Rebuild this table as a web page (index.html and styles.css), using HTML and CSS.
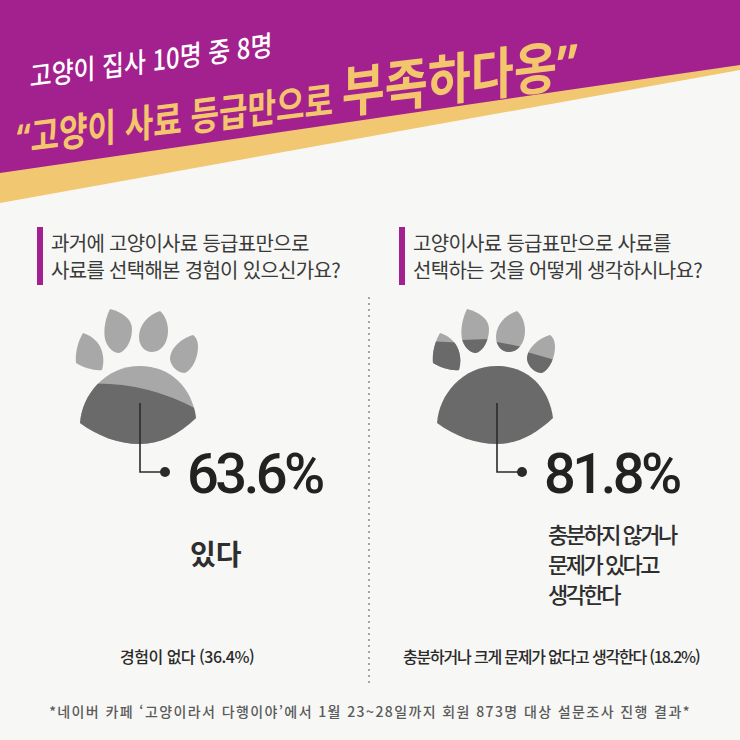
FILE: index.html
```html
<!DOCTYPE html>
<html lang="ko">
<head>
<meta charset="utf-8">
<title>고양이 사료 설문</title>
<link rel="stylesheet" href="styles.css">
</head>
<body>
<div class="page">
  <header class="hero">
    <svg class="hero-bg" width="740" height="210" viewBox="0 0 740 210" aria-hidden="true">
      <polygon fill="#f1c871" points="0,0 740,0 740,70 0,203"/>
      <polygon fill="#a3218e" points="0,0 740,0 740,65 0,173"/>
    </svg>
    <p class="hero-sub">고양이 집사 10명 중 8명</p>
    <p class="hero-title"><span class="qm">“</span>고양이 사료 등급만으로 <span class="big">부족하다옹<span class="qm">”</span></span></p>
  </header>

  <section class="questions">
    <p class="q q-left">과거에 고양이사료 등급표만으로<br>사료를 선택해본 경험이 있으신가요?</p>
    <p class="q q-right">고양이사료 등급표만으로 사료를<br>선택하는 것을 어떻게 생각하시나요?</p>
  </section>

  <section class="charts">
    <div class="col col-left">
      <div class="chart chart-left">
        <svg class="paw" width="130" height="175" viewBox="0 0 130 175" aria-hidden="true">
          <defs>
            <clipPath id="padL"><path d="M10,118 C12,90 35,61 70,61 C100,61 122,82 126,113 C108,130 90,139 70,139 C48,139 28,131 10,118 Z"/></clipPath>
          </defs>
          <g fill="#a8a8a8">
            <path d="M13,28 C8,36 5,48 6,58 C14,63 25,66 32,65 C35,55 33,44 27,37 C23,32 17,29 13,28 Z"/>
            <path d="M40,4 C36,12 33,24 35,34 C37,42 43,48 49,48 C56,46 62,36 62,24 C62,14 52,7 40,4 Z"/>
            <path d="M90,6 C78,10 69,20 69,32 C69,41 75,47 82,47 C91,47 98,38 98,26 C98,18 95,10 90,6 Z"/>
            <path d="M123,30 C110,34 100,44 100,54 C101,62 108,68 115,68 C123,64 128,52 128,42 C128,36 126,32 123,30 Z"/>
          </g>
          <g clip-path="url(#padL)">
            <rect x="0" y="50" width="130" height="100" fill="#a8a8a8"/>
            <path d="M0,80 Q70,72 130,106 L130,150 L0,150 Z" fill="#6a6a6a"/>
          </g>
          <path d="M70,98 V167 H95" fill="none" stroke="#2b2b2b" stroke-width="1.6"/>
          <circle cx="95" cy="167" r="5" fill="#2b2b2b"/>
        </svg>
        <div class="pct">63.6%</div>
      </div>
      <p class="answer answer-left">있다</p>
      <p class="note note-left">경험이 없다 (36.4%)</p>
    </div>

    <div class="divider"></div>

    <div class="col col-right">
      <div class="chart chart-right">
        <svg class="paw" width="130" height="175" viewBox="0 0 130 175" aria-hidden="true">
          <defs>
            <clipPath id="t1"><path d="M13,28 C8,36 5,48 6,58 C14,63 25,66 32,65 C35,55 33,44 27,37 C23,32 17,29 13,28 Z"/></clipPath>
            <clipPath id="t2"><path d="M40,4 C36,12 33,24 35,34 C37,42 43,48 49,48 C56,46 62,36 62,24 C62,14 52,7 40,4 Z"/></clipPath>
            <clipPath id="t3"><path d="M90,6 C78,10 69,20 69,32 C69,41 75,47 82,47 C91,47 98,38 98,26 C98,18 95,10 90,6 Z"/></clipPath>
            <clipPath id="t4"><path d="M123,30 C110,34 100,44 100,54 C101,62 108,68 115,68 C123,64 128,52 128,42 C128,36 126,32 123,30 Z"/></clipPath>
          </defs>
          <g clip-path="url(#t1)">
            <rect x="0" y="20" width="40" height="50" fill="#a8a8a8"/>
            <polygon points="0,36 40,38 40,70 0,70" fill="#6a6a6a"/>
          </g>
          <g clip-path="url(#t2)">
            <rect x="30" y="0" width="36" height="52" fill="#a8a8a8"/>
            <polygon points="30,35 66,34 66,52 30,52" fill="#6a6a6a"/>
          </g>
          <g clip-path="url(#t3)">
            <rect x="65" y="0" width="36" height="52" fill="#a8a8a8"/>
            <polygon points="65,36 101,43 101,52 65,52" fill="#6a6a6a"/>
          </g>
          <g clip-path="url(#t4)">
            <rect x="96" y="25" width="36" height="48" fill="#a8a8a8"/>
            <polygon points="96,46 132,56 132,73 96,73" fill="#6a6a6a"/>
          </g>
          <path fill="#6a6a6a" d="M10,118 C12,90 35,61 70,61 C100,61 122,82 126,113 C108,130 90,139 70,139 C48,139 28,131 10,118 Z"/>
          <path d="M70,98 V167 H95" fill="none" stroke="#2b2b2b" stroke-width="1.6"/>
          <circle cx="95" cy="167" r="5" fill="#2b2b2b"/>
        </svg>
        <div class="pct">81.8%</div>
      </div>
      <p class="answer answer-right">충분하지 않거나<br>문제가 있다고<br>생각한다</p>
      <p class="note note-right">충분하거나 크게 문제가 없다고 생각한다 (18.2%)</p>
    </div>
  </section>

  <p class="foot">*네이버 카페 ‘고양이라서 다행이야’에서 1월 23~28일까지 회원 873명 대상 설문조사 진행 결과*</p>
</div>
</body>
</html>
```

FILE: styles.css
```css
html, body {
  margin: 0;
  padding: 0;
}

body {
  background: #f7f7f5;
  font-family: "Noto Sans CJK KR", "Noto Sans", sans-serif;
  color: #333;
}

.page {
  width: 740px;
  height: 740px;
  overflow: hidden;
}

p {
  margin: 0;
}

/* ---------- hero ---------- */
.hero {
  position: relative;
  height: 206px;
  box-sizing: border-box;
  padding-top: 64px;
}

.hero-bg {
  position: absolute;
  left: 0;
  top: 0;
  z-index: 0;
  display: block;
}

.hero-sub,
.hero-title {
  position: relative;
  z-index: 1;
  white-space: nowrap;
  transform-origin: 0 0;
}

.hero-sub {
  padding-left: 35px;
  font-size: 28px;
  line-height: 30px;
  font-weight: 500;
  color: #ffffff;
  transform: skewY(-7.5deg) scaleX(0.85);
}

.hero-title {
  margin-top: 22px;
  padding-left: 21px;
  font-size: 39px;
  line-height: 44px;
  font-weight: 700;
  color: #f3c66d;
  transform: skewY(-7deg) scaleX(0.795);
}

.hero-title .qm {
  font-family: "Noto Sans", sans-serif;
}

.hero-title .big {
  display: inline-block;
  font-size: 56px;
  line-height: 28px;
  transform: scaleX(1.05);
  transform-origin: 0 100%;
}

/* ---------- questions ---------- */
.questions {
  display: grid;
  grid-template-columns: 370px 370px;
  margin-top: 21px;
}

.q {
  border-left: 6px solid #a3218e;
  padding: 2px 0 2px 8px;
  font-size: 20px;
  line-height: 27px;
  font-weight: 400;
  letter-spacing: -0.7px;
  color: #3a3a3a;
  white-space: nowrap;
}

.q-left {
  margin-left: 37px;
}

.q-right {
  margin-left: 29px;
}

/* ---------- charts ---------- */
.charts {
  display: grid;
  grid-template-columns: 368px 2px 370px;
  height: 390px;
  margin-top: 12px;
}

.divider {
  width: 2px;
  background: repeating-linear-gradient(to bottom, #a6a6a6 0 2px, transparent 2px 6px);
}

.col {
  display: flex;
  flex-direction: column;
}

.chart {
  display: flex;
  align-items: flex-start;
  margin-top: 8px;
}

.chart-left {
  padding-left: 70px;
}

.chart-right {
  padding-left: 57px;
}

.paw {
  display: block;
  flex: none;
}

.pct {
  margin: 142px 0 0 -13px;
  font-family: Roboto, "Liberation Sans", sans-serif;
  font-weight: 500;
  font-size: 56px;
  line-height: 54px;
  letter-spacing: -3.5px;
  color: #222;
}

.answer {
  color: #2e2e2e;
}

.answer-left {
  margin-top: 35px;
  padding-left: 190px;
  font-size: 28px;
  line-height: 34px;
  font-weight: 700;
}

.answer-right {
  margin-top: 17px;
  padding-left: 178px;
  font-size: 22px;
  line-height: 30px;
  font-weight: 500;
  letter-spacing: -2.5px;
}

.note {
  margin-top: auto;
  padding-bottom: 21px;
  font-size: 16px;
  line-height: 20px;
  font-weight: 500;
  color: #2a2a2a;
  white-space: nowrap;
}

.note-left {
  padding-left: 120px;
  letter-spacing: -0.5px;
}

.note-right {
  padding-left: 33px;
  letter-spacing: -1.2px;
}

/* ---------- footnote ---------- */
.foot {
  margin-top: 14px;
  text-align: center;
  font-size: 14px;
  line-height: 20px;
  font-weight: 500;
  letter-spacing: 1.4px;
  color: #5a5a5a;
  white-space: nowrap;
}
```
